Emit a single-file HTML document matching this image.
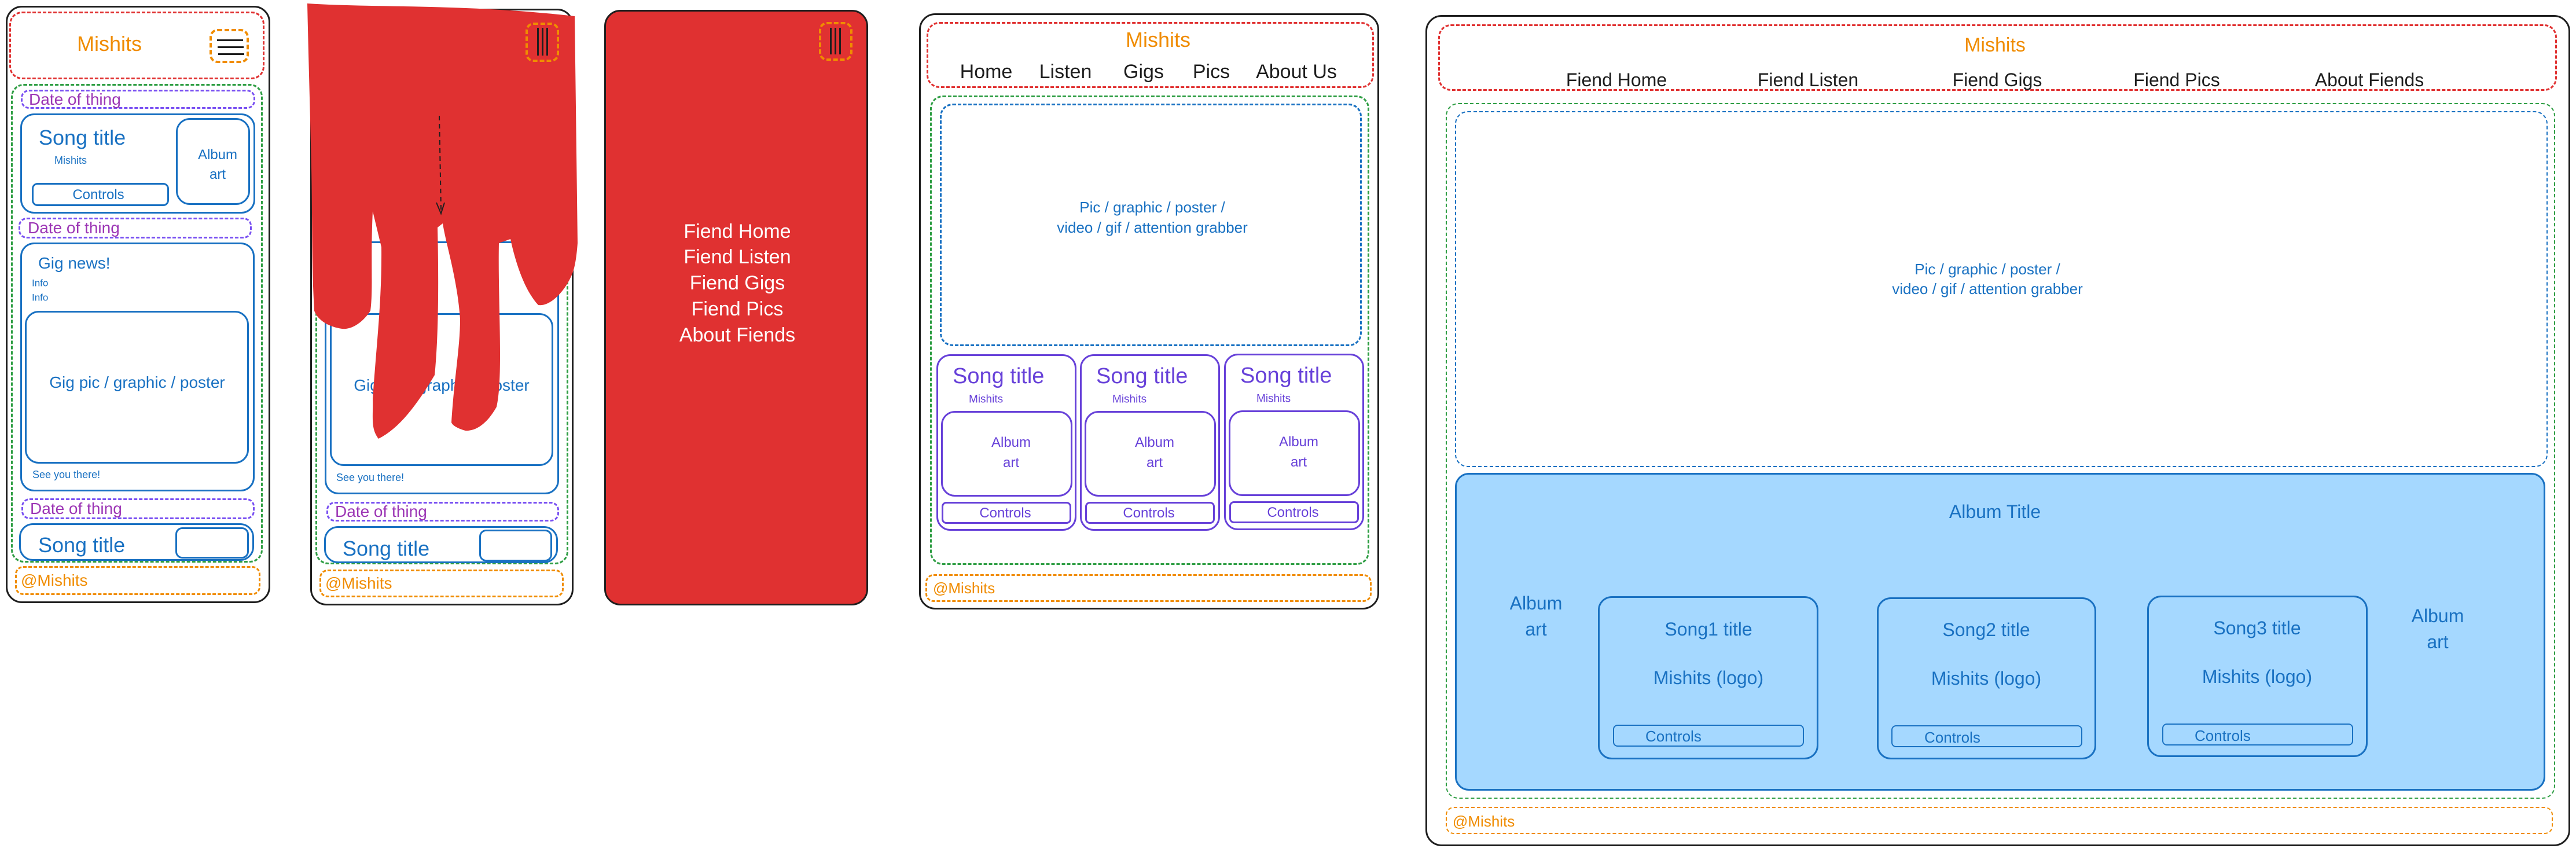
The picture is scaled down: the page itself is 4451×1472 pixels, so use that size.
<!DOCTYPE html>
<html><head><meta charset="utf-8"><style>
*{margin:0;padding:0;box-sizing:border-box}
body{width:4451px;height:1472px;background:#fff;position:relative;overflow:hidden;font-family:"Liberation Sans",sans-serif}
.b{position:absolute}
.fr{border:3px solid #1e1e1e;border-radius:28px}
.rd{border:3px dashed #e03131;border-radius:22px}
.gr{border:3px dashed #2f9e44;border-radius:22px}
.bl{border:3px dashed #1971c2;border-radius:22px}
.pu{border:3px dashed #7950f2;border-radius:14px}
.or{border:3px dashed #f08c00;border-radius:14px}
.bs{border:3px solid #1971c2;border-radius:24px}
.ps{border:3px solid #6741d9;border-radius:24px}
.t{position:absolute;white-space:nowrap;line-height:1;transform:translate(-50%,-50%)}
.l{position:absolute;white-space:nowrap;line-height:1;transform:translateY(-50%)}
.cb{color:#1971c2}.co{color:#f08c00}.cp{color:#9c36b5}.cv{color:#6741d9}
.hl{position:absolute;height:3px;background:#1e1e1e}
.vl{position:absolute;width:3px;background:#1e1e1e}
</style></head><body>

<!-- Frame 1 -->
<div class="b fr" style="left:10px;top:10px;width:457px;height:1032px"></div>
<div class="b rd" style="left:16px;top:20px;width:441px;height:117px"></div>
<div class="t co" style="left:189px;top:76px;font-size:36px">Mishits</div>
<div class="b or" style="left:362px;top:50px;width:68px;height:59px;border-width:4px"></div>
<div class="hl" style="left:375px;top:68px;width:45px"></div>
<div class="hl" style="left:376px;top:80px;width:45px"></div>
<div class="hl" style="left:377px;top:92px;width:45px"></div>
<div class="b gr" style="left:19px;top:145px;width:435px;height:827px"></div>
<div class="b pu" style="left:36px;top:155px;width:405px;height:33px"></div>
<div class="l cp" style="left:50px;top:172px;font-size:28px">Date of thing</div>
<div class="b bs" style="left:35px;top:196px;width:406px;height:173px"></div>
<div class="l cb" style="left:67px;top:238px;font-size:36px">Song title</div>
<div class="l cb" style="left:94px;top:277px;font-size:18px">Mishits</div>
<div class="b bs" style="left:304px;top:204px;width:128px;height:150px"></div>
<div class="t cb" style="left:376px;top:268px;font-size:24px">Album</div>
<div class="t cb" style="left:376px;top:302px;font-size:24px">art</div>
<div class="b bs" style="left:55px;top:316px;width:237px;height:40px;border-radius:10px"></div>
<div class="t cb" style="left:170px;top:337px;font-size:24px">Controls</div>
<div class="b pu" style="left:32px;top:376px;width:403px;height:36px"></div>
<div class="l cp" style="left:48px;top:394px;font-size:28px">Date of thing</div>
<div class="b bs" style="left:35px;top:419px;width:405px;height:430px"></div>
<div class="l cb" style="left:66px;top:455px;font-size:28px">Gig news!</div>
<div class="l cb" style="left:55px;top:489px;font-size:17px">Info</div>
<div class="l cb" style="left:55px;top:514px;font-size:17px">Info</div>
<div class="b bs" style="left:43px;top:537px;width:387px;height:264px"></div>
<div class="t cb" style="left:237px;top:661px;font-size:28px">Gig pic / graphic / poster</div>
<div class="l cb" style="left:56px;top:820px;font-size:18px">See you there!</div>
<div class="b pu" style="left:37px;top:861px;width:403px;height:36px"></div>
<div class="l cp" style="left:52px;top:879px;font-size:28px">Date of thing</div>
<div class="b bs" style="left:33px;top:904px;width:406px;height:65px"></div>
<div class="l cb" style="left:66px;top:942px;font-size:36px">Song title</div>
<div class="b bs" style="left:303px;top:911px;width:127px;height:54px;border-radius:12px"></div>
<div class="b or" style="left:26px;top:978px;width:424px;height:50px"></div>
<div class="l co" style="left:36px;top:1003px;font-size:28px">@Mishits</div>

<!-- Frame 2 -->
<div class="b fr" style="left:536px;top:15px;width:455px;height:1031px"></div>
<div class="b gr" style="left:545px;top:150px;width:437px;height:825px"></div>
<div class="b bs" style="left:561px;top:417px;width:405px;height:437px"></div>
<div class="b bs" style="left:570px;top:541px;width:386px;height:264px"></div>
<div class="t cb" style="left:763px;top:666px;font-size:28px">Gig pic / graphic / poster</div>
<div class="l cb" style="left:581px;top:825px;font-size:18px">See you there!</div>
<div class="b pu" style="left:564px;top:867px;width:402px;height:34px"></div>
<div class="l cp" style="left:579px;top:884px;font-size:28px">Date of thing</div>
<div class="b bs" style="left:560px;top:909px;width:404px;height:64px"></div>
<div class="l cb" style="left:592px;top:948px;font-size:36px">Song title</div>
<div class="b bs" style="left:828px;top:915px;width:126px;height:55px;border-radius:12px"></div>
<div class="b or" style="left:552px;top:984px;width:422px;height:48px"></div>
<div class="l co" style="left:562px;top:1008px;font-size:28px">@Mishits</div>
<svg class="b" style="left:0;top:0" width="1100" height="1100">
<path fill="#e03131" d="M531,6 C650,14 800,6 993,28 L998,420 C995,460 990,470 988,475 C975,505 950,530 930,527 C905,500 890,450 882,413 L862,420 C860,520 870,650 858,703 C840,735 820,745 804,744 C790,740 782,735 780,730 C785,650 795,600 795,551 C790,480 770,420 765,386 L756,393 C758,480 758,580 751,648 C720,700 690,740 654,758 C640,740 645,720 644,689 C650,600 660,520 659,427 L644,365 C640,450 645,500 640,537 C625,560 605,570 591,568 C570,565 550,555 543,537 C538,450 540,380 538,289 C536,200 533,100 531,6 Z"/>
<path d="M759,200 L762,362" stroke="#1e1e1e" stroke-width="2" stroke-dasharray="8 6" fill="none"/>
<path d="M754,350 L762,369 L768,350" stroke="#1e1e1e" stroke-width="2" fill="none"/>
</svg>
<div class="b or" style="left:908px;top:39px;width:58px;height:68px;border-width:4px"></div>
<div class="vl" style="left:928px;top:48px;height:48px"></div>
<div class="vl" style="left:936px;top:48px;height:48px"></div>
<div class="vl" style="left:944px;top:48px;height:48px"></div>

<!-- Frame 3 -->
<div class="b fr" style="left:1044px;top:17px;width:456px;height:1029px;background:#e03131"></div>
<div class="b or" style="left:1415px;top:38px;width:58px;height:67px;border-width:4px"></div>
<div class="vl" style="left:1434px;top:48px;height:46px"></div>
<div class="vl" style="left:1442px;top:48px;height:46px"></div>
<div class="vl" style="left:1450px;top:48px;height:46px"></div>
<div class="t" style="left:1274px;top:400px;font-size:34px;color:#fff">Fiend Home</div>
<div class="t" style="left:1274px;top:444px;font-size:34px;color:#fff">Fiend Listen</div>
<div class="t" style="left:1274px;top:489px;font-size:34px;color:#fff">Fiend Gigs</div>
<div class="t" style="left:1274px;top:534px;font-size:34px;color:#fff">Fiend Pics</div>
<div class="t" style="left:1274px;top:579px;font-size:34px;color:#fff">About Fiends</div>

<!-- Frame 4 -->
<div class="b fr" style="left:1588px;top:23px;width:795px;height:1030px"></div>
<div class="b rd" style="left:1601px;top:38px;width:773px;height:114px"></div>
<div class="t co" style="left:2001px;top:69px;font-size:36px">Mishits</div>
<div class="t" style="left:1704px;top:124px;font-size:34px;color:#1e1e1e">Home</div>
<div class="t" style="left:1841px;top:124px;font-size:34px;color:#1e1e1e">Listen</div>
<div class="t" style="left:1976px;top:124px;font-size:34px;color:#1e1e1e">Gigs</div>
<div class="t" style="left:2093px;top:124px;font-size:34px;color:#1e1e1e">Pics</div>
<div class="t" style="left:2240px;top:124px;font-size:34px;color:#1e1e1e">About Us</div>
<div class="b gr" style="left:1607px;top:165px;width:759px;height:811px"></div>
<div class="b bl" style="left:1624px;top:179px;width:729px;height:419px"></div>
<div class="t cb" style="left:1991px;top:358px;font-size:26px">Pic / graphic / poster /</div>
<div class="t cb" style="left:1991px;top:393px;font-size:26px">video / gif / attention grabber</div>

<div class="b ps" style="left:1618px;top:612px;width:242px;height:305px"></div>
<div class="l cv" style="left:1646px;top:650px;font-size:38px">Song title</div>
<div class="l cv" style="left:1674px;top:690px;font-size:19px">Mishits</div>
<div class="b ps" style="left:1626px;top:710px;width:227px;height:148px"></div>
<div class="t cv" style="left:1747px;top:765px;font-size:24px">Album</div>
<div class="t cv" style="left:1747px;top:800px;font-size:24px">art</div>
<div class="b ps" style="left:1627px;top:867px;width:224px;height:38px;border-radius:8px"></div>
<div class="t cv" style="left:1737px;top:887px;font-size:24px">Controls</div>

<div class="b ps" style="left:1866px;top:612px;width:242px;height:305px"></div>
<div class="l cv" style="left:1894px;top:650px;font-size:38px">Song title</div>
<div class="l cv" style="left:1922px;top:690px;font-size:19px">Mishits</div>
<div class="b ps" style="left:1874px;top:710px;width:227px;height:148px"></div>
<div class="t cv" style="left:1995px;top:765px;font-size:24px">Album</div>
<div class="t cv" style="left:1995px;top:800px;font-size:24px">art</div>
<div class="b ps" style="left:1875px;top:867px;width:224px;height:38px;border-radius:8px"></div>
<div class="t cv" style="left:1985px;top:887px;font-size:24px">Controls</div>

<div class="b ps" style="left:2115px;top:611px;width:242px;height:305px"></div>
<div class="l cv" style="left:2143px;top:649px;font-size:38px">Song title</div>
<div class="l cv" style="left:2171px;top:689px;font-size:19px">Mishits</div>
<div class="b ps" style="left:2123px;top:709px;width:227px;height:148px"></div>
<div class="t cv" style="left:2244px;top:764px;font-size:24px">Album</div>
<div class="t cv" style="left:2244px;top:799px;font-size:24px">art</div>
<div class="b ps" style="left:2124px;top:866px;width:224px;height:38px;border-radius:8px"></div>
<div class="t cv" style="left:2234px;top:886px;font-size:24px">Controls</div>

<div class="b or" style="left:1599px;top:992px;width:771px;height:48px"></div>
<div class="l co" style="left:1612px;top:1016px;font-size:26px">@Mishits</div>

<!-- Frame 5 -->
<div class="b fr" style="left:2463px;top:26px;width:1978px;height:1436px"></div>
<div class="b rd" style="left:2485px;top:42px;width:1933px;height:115px"></div>
<div class="t co" style="left:3447px;top:78px;font-size:34px">Mishits</div>
<div class="t" style="left:2793px;top:138px;font-size:32px;color:#1e1e1e">Fiend Home</div>
<div class="t" style="left:3124px;top:138px;font-size:32px;color:#1e1e1e">Fiend Listen</div>
<div class="t" style="left:3451px;top:138px;font-size:32px;color:#1e1e1e">Fiend Gigs</div>
<div class="t" style="left:3761px;top:138px;font-size:32px;color:#1e1e1e">Fiend Pics</div>
<div class="t" style="left:4094px;top:138px;font-size:32px;color:#1e1e1e">About Fiends</div>
<div class="b gr" style="left:2498px;top:178px;width:1917px;height:1202px;border-width:2px"></div>
<div class="b bl" style="left:2514px;top:192px;width:1888px;height:615px;border-width:2px"></div>
<div class="t cb" style="left:3434px;top:465px;font-size:26px">Pic / graphic / poster /</div>
<div class="t cb" style="left:3434px;top:499px;font-size:26px">video / gif / attention grabber</div>
<div class="b" style="left:2514px;top:817px;width:1884px;height:549px;background:#a5d8ff;border:3px solid #1971c2;border-radius:24px"></div>
<div class="t cb" style="left:3447px;top:884px;font-size:32px">Album Title</div>
<div class="t cb" style="left:2654px;top:1042px;font-size:32px">Album</div>
<div class="t cb" style="left:2654px;top:1087px;font-size:32px">art</div>
<div class="t cb" style="left:4212px;top:1064px;font-size:32px">Album</div>
<div class="t cb" style="left:4212px;top:1109px;font-size:32px">art</div>

<div class="b bs" style="left:2761px;top:1030px;width:381px;height:282px"></div>
<div class="t cb" style="left:2952px;top:1087px;font-size:32px">Song1 title</div>
<div class="t cb" style="left:2952px;top:1171px;font-size:32px">Mishits (logo)</div>
<div class="b bs" style="left:2787px;top:1252px;width:330px;height:38px;border-radius:8px;border-width:2px"></div>
<div class="l cb" style="left:2843px;top:1272px;font-size:26px">Controls</div>

<div class="b bs" style="left:3243px;top:1032px;width:379px;height:280px"></div>
<div class="t cb" style="left:3432px;top:1088px;font-size:32px">Song2 title</div>
<div class="t cb" style="left:3432px;top:1172px;font-size:32px">Mishits (logo)</div>
<div class="b bs" style="left:3268px;top:1253px;width:330px;height:38px;border-radius:8px;border-width:2px"></div>
<div class="l cb" style="left:3325px;top:1274px;font-size:26px">Controls</div>

<div class="b bs" style="left:3710px;top:1029px;width:381px;height:279px"></div>
<div class="t cb" style="left:3900px;top:1085px;font-size:32px">Song3 title</div>
<div class="t cb" style="left:3900px;top:1169px;font-size:32px">Mishits (logo)</div>
<div class="b bs" style="left:3736px;top:1250px;width:330px;height:38px;border-radius:8px;border-width:2px"></div>
<div class="l cb" style="left:3792px;top:1271px;font-size:26px">Controls</div>

<div class="b or" style="left:2498px;top:1394px;width:1913px;height:47px;border-width:2px"></div>
<div class="l co" style="left:2510px;top:1419px;font-size:26px">@Mishits</div>
</body></html>
